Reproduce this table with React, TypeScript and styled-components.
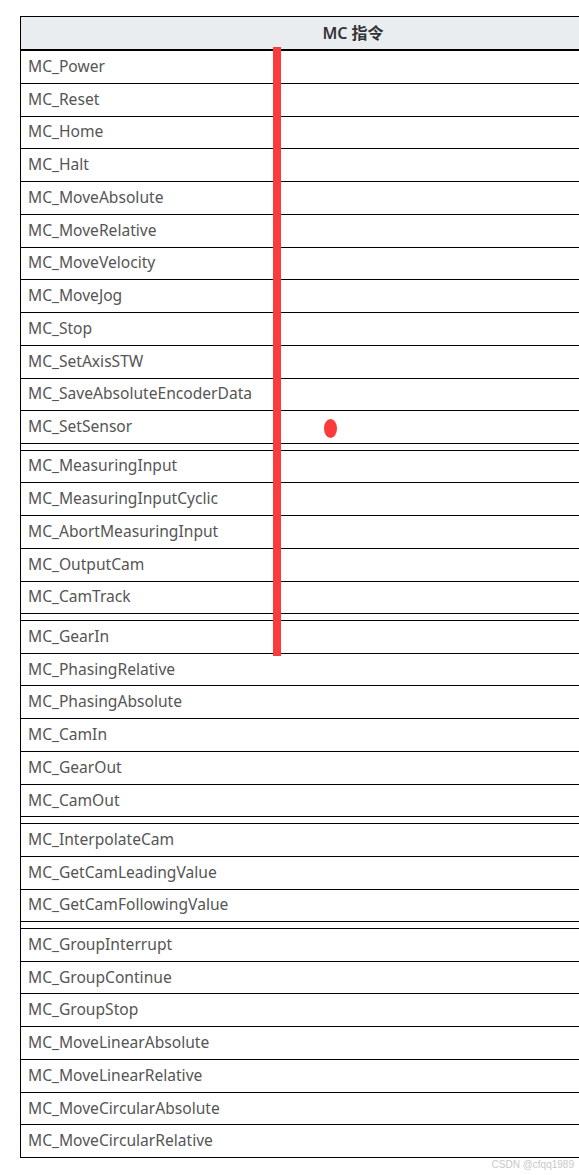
import styled, { createGlobalStyle } from 'styled-components';

const GlobalStyle = createGlobalStyle`
  html, body {
    margin: 0;
    padding: 0;
    background: #fff;
    overflow-x: hidden;
  }
`;

// Layout
const Page = styled.div`
  position: relative;
  width: 579px;
  padding: 16px 0 0 20px;
  box-sizing: border-box;
  overflow: hidden;
  font-family: "Noto Sans", "Open Sans", "Noto Sans CJK SC", sans-serif;
`;

const Table = styled.div`
  width: 664px;
  border-top: 1px solid #000;
  border-left: 1px solid #000;
  display: flex;
  flex-direction: column;
`;

const HeaderCell = styled.div`
  height: 32px;
  box-sizing: border-box;
  padding-bottom: 2px;
  background-color: #e9edf0;
  border-bottom: 2px solid #000;
  display: flex;
  align-items: center;
  justify-content: center;
  color: #333;
  font-size: 16px;
  font-weight: 600;
  height: 34px;
`;

const Row = styled.div`
  height: 32.75px;
  box-sizing: border-box;
  border-bottom: 1px solid #000;
  display: flex;
  align-items: center;
  padding: 0 0 2px 7px;
  color: #555;
  font-size: 15.6px;
`;

const Spacer = styled.div`
  height: 6.6px;
  box-sizing: border-box;
  border-bottom: 1px solid #000;
`;

const Footer = styled.div`
  height: 18px;
  padding-right: 5px;
  text-align: right;
  font-family: "Liberation Sans", Arial, sans-serif;
  font-size: 10px;
  line-height: 14px;
  color: #c8c8c8;
`;

// Annotations drawn over the table
const MarkBar = styled.div`
  position: absolute;
  left: 273px;
  top: 47px;
  width: 8px;
  height: 609px;
  background-color: #fb3a3a;
`;

const MarkDot = styled.div`
  position: absolute;
  left: 324px;
  top: 419px;
  width: 13px;
  height: 19px;
  border-radius: 50%;
  background-color: #fb3a3a;
`;

const groups: string[][] = [
  [
    'MC_Power', 'MC_Reset', 'MC_Home', 'MC_Halt', 'MC_MoveAbsolute', 'MC_MoveRelative',
    'MC_MoveVelocity', 'MC_MoveJog', 'MC_Stop', 'MC_SetAxisSTW',
    'MC_SaveAbsoluteEncoderData', 'MC_SetSensor',
  ],
  [
    'MC_MeasuringInput', 'MC_MeasuringInputCyclic', 'MC_AbortMeasuringInput',
    'MC_OutputCam', 'MC_CamTrack',
  ],
  [
    'MC_GearIn', 'MC_PhasingRelative', 'MC_PhasingAbsolute', 'MC_CamIn',
    'MC_GearOut', 'MC_CamOut',
  ],
  ['MC_InterpolateCam', 'MC_GetCamLeadingValue', 'MC_GetCamFollowingValue'],
  [
    'MC_GroupInterrupt', 'MC_GroupContinue', 'MC_GroupStop', 'MC_MoveLinearAbsolute',
    'MC_MoveLinearRelative', 'MC_MoveCircularAbsolute', 'MC_MoveCircularRelative',
  ],
];

export default function App() {
  return (
    <>
      <GlobalStyle />
      <Page>
        <Table>
          <HeaderCell>MC 指令</HeaderCell>
          {groups.map((group, gi) => (
            <div key={gi}>
              {gi > 0 && <Spacer />}
              {group.map((name) => (
                <Row key={name}>{name}</Row>
              ))}
            </div>
          ))}
        </Table>
        <Footer>CSDN @cfqq1989</Footer>
        <MarkBar />
        <MarkDot />
      </Page>
    </>
  );
}
